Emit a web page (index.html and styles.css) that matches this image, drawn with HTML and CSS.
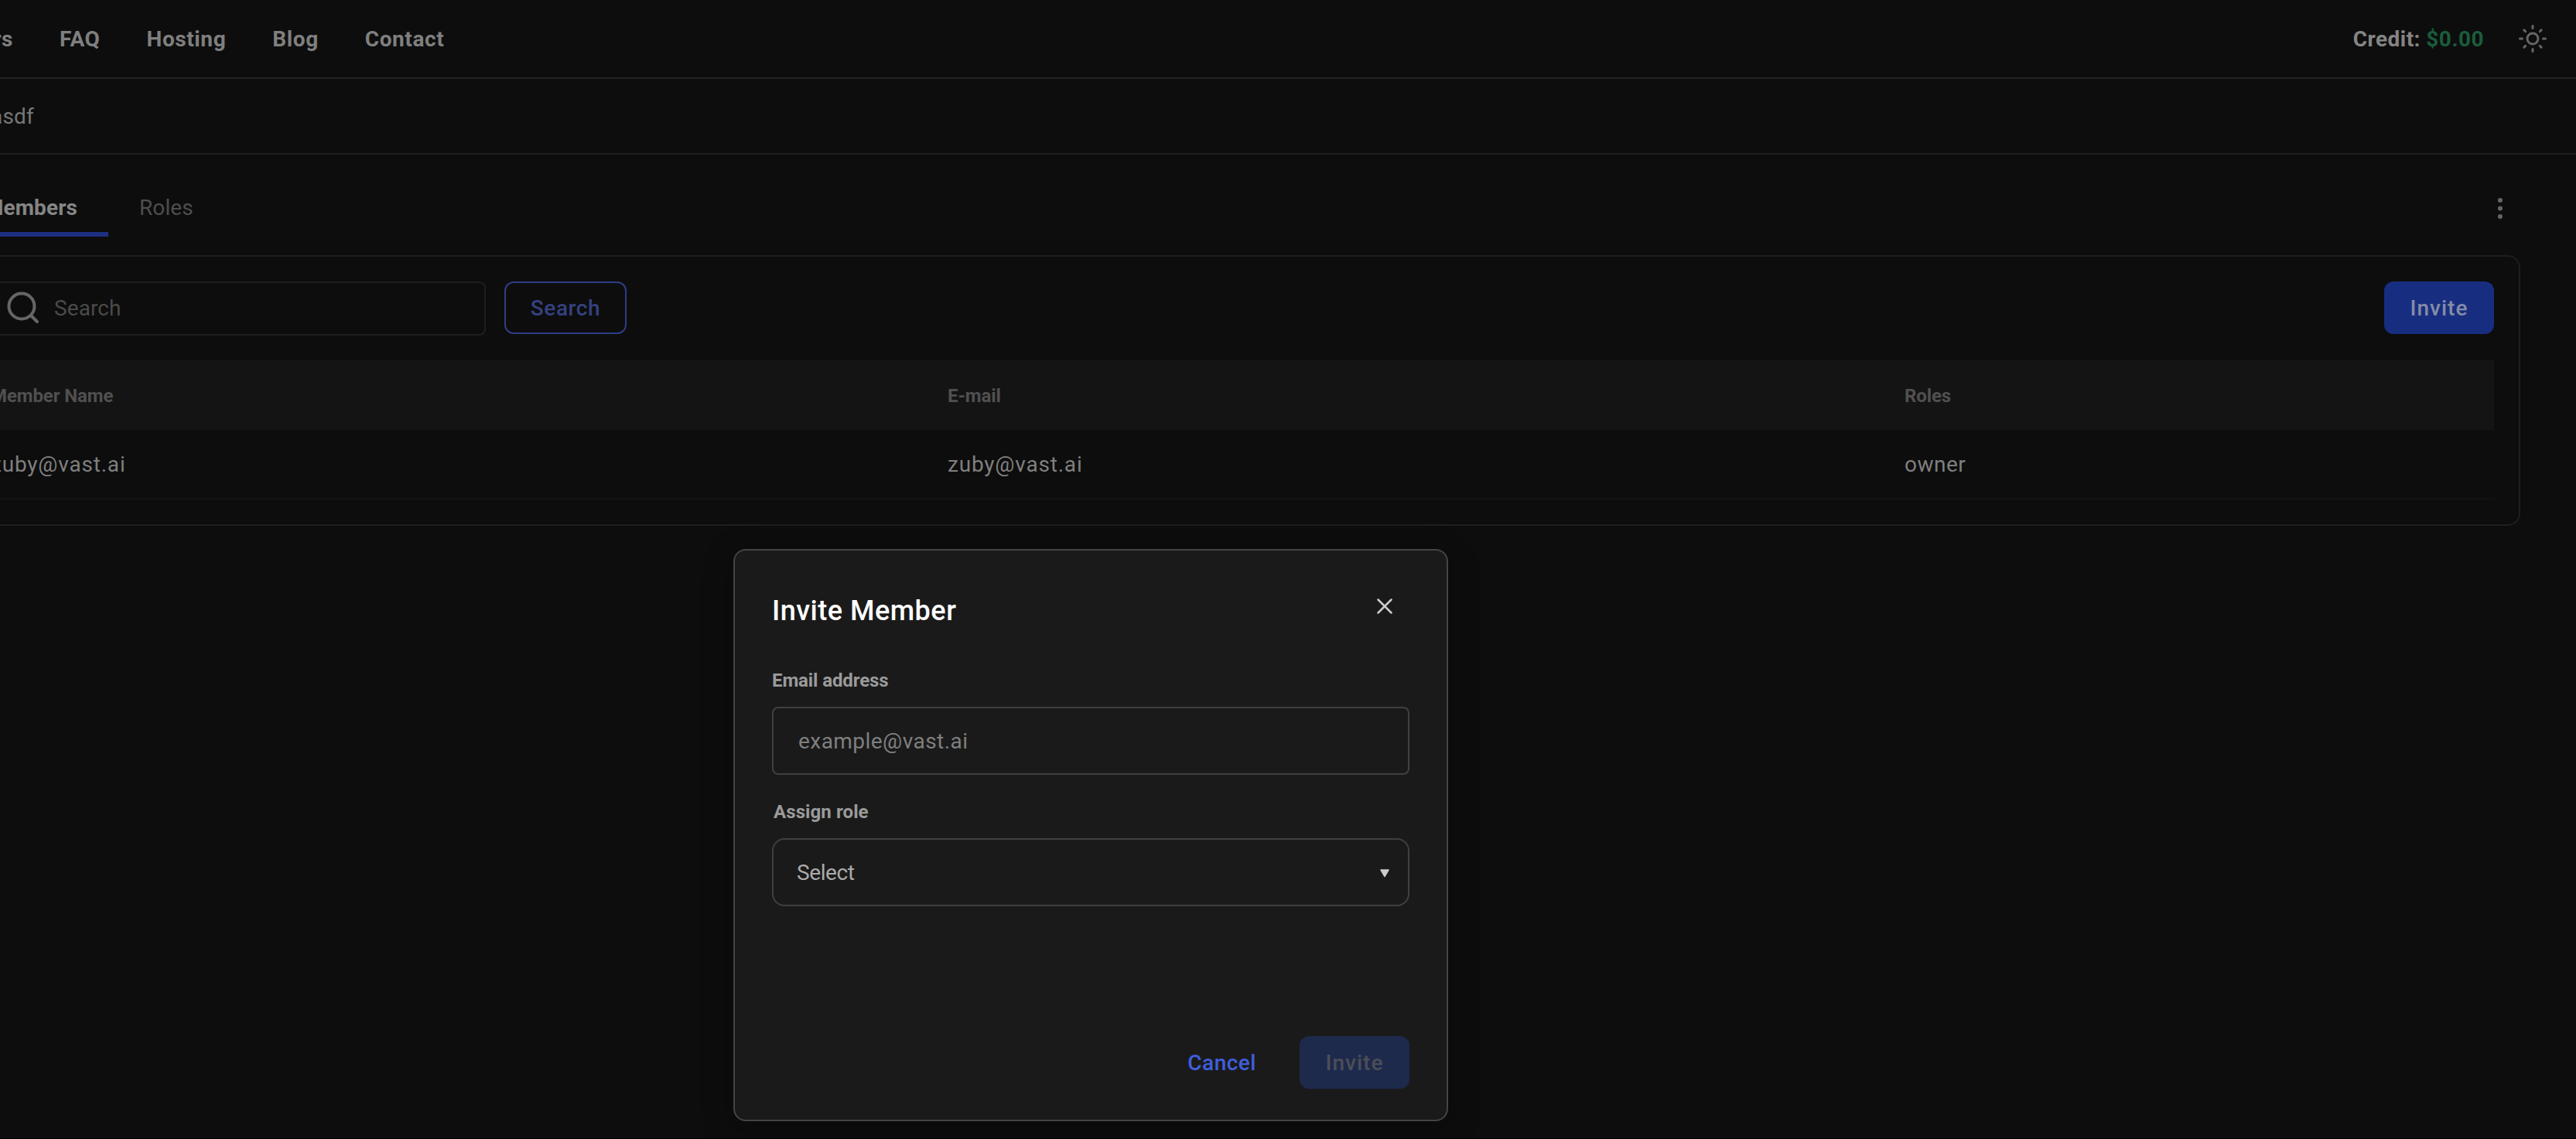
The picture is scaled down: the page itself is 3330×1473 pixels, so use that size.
FILE: index.html
```html
<!DOCTYPE html>
<html lang="en">
<head>
  <meta charset="UTF-8">
  <meta name="viewport" content="width=device-width, initial-scale=1.0">
  <title>Members - Vast.ai</title>
  <link rel="stylesheet" href="styles.css">
</head>
<body>
  <header class="topbar">
    <nav class="nav">
      <a href="#">Users</a>
      <a href="#">FAQ</a>
      <a href="#">Hosting</a>
      <a href="#">Blog</a>
      <a href="#">Contact</a>
    </nav>
    <div class="account">
      <span class="credit">Credit: <span class="amount">$0.00</span></span>
      <svg class="sun" viewBox="0 0 36 36">
        <circle cx="18" cy="18" r="7"/>
        <path d="M18 1.5v3M18 31.5v3M1.5 18h3M31.5 18h3M6.8 6.8l1.8 1.8M27.4 27.4l1.8 1.8M6.8 29.2l1.8-1.8M27.4 8.6l1.8-1.8"/>
      </svg>
    </div>
  </header>

  <div class="team-bar"><span class="team-name">asdf</span></div>

  <main class="content">
    <div class="tabs">
      <a class="tab active" href="#">Members</a>
      <a class="tab" href="#">Roles</a>
      <svg class="dots" viewBox="0 0 8 32">
        <circle cx="4" cy="5" r="3"/><circle cx="4" cy="15.5" r="3"/><circle cx="4" cy="26" r="3"/>
      </svg>
    </div>

    <section class="panel">
      <div class="toolbar">
        <div class="search-box">
          <svg class="search-icon" viewBox="0 0 44 44">
            <circle cx="20" cy="19" r="16.5"/>
            <path d="M32 31l8 8"/>
          </svg>
          <span>Search</span>
        </div>
        <button class="btn btn-outline">Search</button>
        <button class="btn btn-primary">Invite</button>
      </div>
      <div class="row head"><span>Member Name</span><span>E-mail</span><span>Roles</span></div>
      <div class="row"><span>zuby@vast.ai</span><span>zuby@vast.ai</span><span class="role">owner</span></div>
    </section>
  </main>

  <div class="modal">
    <div class="modal-head">
      <h2>Invite Member</h2>
      <svg class="close" viewBox="0 0 20 20"><path d="M1.5 1.5l17 17M18.5 1.5l-17 17"/></svg>
    </div>
    <label class="label" for="email">Email address</label>
    <input class="field" type="email" id="email" placeholder="example@vast.ai">
    <div class="label label-role">Assign role</div>
    <div class="field select">
      <span>Select</span>
      <svg class="arrow" viewBox="0 0 14 11"><path d="M2 1h10L7 9.5z"/></svg>
    </div>
    <div class="modal-actions">
      <button class="btn btn-text">Cancel</button>
      <button class="btn btn-disabled">Invite</button>
    </div>
  </div>
</body>
</html>
```
FILE: styles.css
```css
* { box-sizing: border-box; }
body { font-family: Roboto, Arial, sans-serif; font-size: 28px; line-height: 34px; letter-spacing: 0.5px; background: #0d0d0d; color: #7f7f7f; margin: 0; height: 1473px; overflow: hidden; position: relative; border-bottom: 1px solid #000; }
a { color: inherit; text-decoration: none; }
svg { display: block; flex: none; }

/* top bar */
.topbar { display: flex; justify-content: space-between; align-items: center; height: 102px; border-bottom: 2px solid #242424; }
.nav { display: flex; gap: 60px; font-weight: 700; margin-left: -311px; padding-top: 2px; letter-spacing: 0.6px; white-space: nowrap; }
.nav a:first-child { width: 328px; text-align: right; }
.account { display: flex; align-items: center; gap: 45px; padding-right: 38px; font-weight: 700; letter-spacing: 0.45px; }
.credit { color: #858585; padding-top: 2px; }
.amount { color: #1a5c3c; }
.sun { width: 36px; height: 36px; fill: none; stroke: #666; stroke-width: 3; stroke-linecap: round; }

.team-bar { height: 98px; border-bottom: 2px solid #1e1e1e; display: flex; align-items: center; padding-top: 2px; }
.team-name { width: 44px; display: flex; justify-content: flex-end; letter-spacing: 0.2px; color: #777; }

/* tabs */
.content { margin-left: -78px; margin-right: 72px; }
.tabs { display: flex; height: 130px; padding-top: 51px; }
.tab { height: 55px; padding: 1px 40px 0; letter-spacing: 0.1px; color: #4d4d4d; }
.tab.active { width: 218px; text-align: right; font-weight: 700; color: #858585; border-bottom: 6px solid #1c2f80; }
.dots { width: 8px; height: 32px; margin: 3px 22px 0 auto; fill: #666; }

/* members table */
.panel { height: 350px; border: 2px solid #1e1e1e; border-radius: 16px; padding: 32px; }
.toolbar { display: flex; align-items: flex-start; height: 102px; }
.search-box { width: 672px; height: 70px; border: 2px solid #1e1e1e; border-radius: 8px; display: flex; align-items: center; padding-left: 50px; gap: 18px; letter-spacing: 0.1px; color: #4a4a4a; }
.search-icon { width: 44px; height: 44px; fill: none; stroke: #666; stroke-width: 4; stroke-linecap: round; }
.btn { height: 68px; border: 0; border-radius: 12px; padding: 1px 0 0; font: 500 28px/34px Roboto, Arial, sans-serif; letter-spacing: 1px; cursor: pointer; }
.btn-outline { width: 158px; margin-left: 24px; background: none; border: 2px solid #2e3d86; letter-spacing: 0.6px; color: #34427f; }
.btn-primary { width: 142px; margin-left: auto; background: #172e80; color: #858ba8; }
.row { display: grid; grid-template-columns: 1237px 1237px auto; align-items: center; height: 90px; padding: 2px 0 0 32px; border-bottom: 2px solid #131313; letter-spacing: 0.8px; }
.role { letter-spacing: 0.5px; }
.head { background: #141414; color: #505050; font-size: 24px; font-weight: 700; letter-spacing: -0.1px; border: 0; }

/* invite modal */
.modal { position: absolute; left: 948px; top: 710px; width: 924px; height: 740px; background: #1a1a1a; border: 2px solid #444; border-radius: 16px; padding: 48px; box-shadow: 0 10px 40px rgba(0, 0, 0, 0.3); display: flex; flex-direction: column; }
.modal-head { display: flex; justify-content: space-between; height: 105px; }
.modal-head h2 { margin: 8px 0 0; font-size: 36px; line-height: 44px; font-weight: 500; letter-spacing: 0.5px; color: #fff; }
.close { width: 20px; height: 20px; margin: 14px 22px 0 0; fill: none; stroke: #ccc; stroke-width: 2.5; stroke-linecap: round; }
.label { font-size: 24px; line-height: 30px; font-weight: 700; letter-spacing: -0.1px; color: #9b9b9b; }
.field { width: 824px; height: 88px; flex: none; margin-top: 19px; background: none; border: 2px solid #404040; border-radius: 8px; padding: 0 32px; font: 400 28px Roboto, Arial, sans-serif; letter-spacing: 0.45px; color: #aaa; }
.field::placeholder { color: #7f7f7f; }
.label-role { margin: 33px 0 0 2px; letter-spacing: 0.1px; }
.select { display: flex; align-items: center; justify-content: space-between; border-radius: 16px; padding: 0 23px 0 30px; letter-spacing: -0.4px; }
.arrow { width: 14px; height: 11px; margin-top: 2px; fill: #ccc; stroke: #ccc; stroke-width: 1.5; stroke-linejoin: round; }
.modal-actions { display: flex; justify-content: flex-end; margin-top: auto; margin-bottom: -8px; }
.btn-text { background: none; color: #3f5fdc; padding: 1px 56px 0; letter-spacing: 0.5px; }
.btn-disabled { width: 142px; background: #1e2a4c; color: #4b4e57; }
```
